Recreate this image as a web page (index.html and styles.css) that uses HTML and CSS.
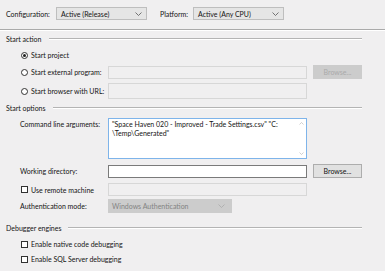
FILE: index.html
```html
<!DOCTYPE html>
<html>
<head>
  <meta charset='utf-8'>
  <title>Debug</title>
  <link rel="stylesheet" href="styles.css">
</head>
<body>

  <div class="topbar">
    <span class="label">Configuration:</span>
    <div class="combo combo-top">
      <span>Active (Release)</span>
      <svg class="chev" width="7" height="4" viewBox="0 0 7 4"><polyline points="0.5,0.5 3.5,3.5 6.5,0.5" fill="none" stroke="#555" stroke-width="0.8"/></svg>
    </div>
    <span class="label platform">Platform:</span>
    <div class="combo combo-top">
      <span>Active (Any CPU)</span>
      <svg class="chev" width="7" height="4" viewBox="0 0 7 4"><polyline points="0.5,0.5 3.5,3.5 6.5,0.5" fill="none" stroke="#555" stroke-width="0.8"/></svg>
    </div>
  </div>
  <div class="separator"></div>

  <!-- Start action -->
  <div class="group-head head-action"><span>Start action</span><i></i></div>

  <div class="row row-project">
    <span class="radio checked"></span>
    <span class="opt">Start project</span>
  </div>
  <div class="row row-external">
    <div class="lead">
      <span class="radio"></span>
      <span class="opt">Start external program:</span>
    </div>
    <div class="box disabled"></div>
    <div class="button disabled">Browse...</div>
  </div>
  <div class="row row-url">
    <div class="lead">
      <span class="radio"></span>
      <span class="opt">Start browser with URL:</span>
    </div>
    <div class="box disabled tall"></div>
  </div>

  <!-- Start options -->
  <div class="group-head head-options"><span>Start options</span><i></i></div>

  <div class="row row-args">
    <div class="lead"><span class="sub">Command line arguments:</span></div>
    <div class="textarea">
      <div class="args">"Space Haven 020 - Improved - Trade Settings.csv" "C:<br>\Temp\Generated"</div>
      <div class="scroll">
        <svg width="5" height="3" viewBox="0 0 5 3"><polyline points="0.5,2.5 2.5,0.5 4.5,2.5" fill="none" stroke="#bbb" stroke-width="0.7"/></svg>
        <svg width="5" height="3" viewBox="0 0 5 3"><polyline points="0.5,0.5 2.5,2.5 4.5,0.5" fill="none" stroke="#bbb" stroke-width="0.7"/></svg>
      </div>
    </div>
  </div>
  <div class="row row-workdir">
    <div class="lead"><span class="sub">Working directory:</span></div>
    <div class="box"></div>
    <div class="button">Browse...</div>
  </div>
  <div class="row row-remote">
    <div class="lead">
      <span class="check"></span>
      <span class="opt">Use remote machine</span>
    </div>
    <div class="box disabled"></div>
  </div>
  <div class="row row-auth">
    <div class="lead"><span class="sub">Authentication mode:</span></div>
    <div class="combo combo-auth">
      <span>Windows Authentication</span>
      <svg class="chev" width="7" height="4" viewBox="0 0 7 4"><polyline points="0.5,0.5 3.5,3.5 6.5,0.5" fill="none" stroke="#aaa" stroke-width="0.8"/></svg>
    </div>
  </div>

  <!-- Debugger engines -->
  <div class="group-head head-engines"><span>Debugger engines</span><i></i></div>

  <div class="row row-native">
    <span class="check"></span>
    <span class="opt">Enable native code debugging</span>
  </div>
  <div class="row row-sql">
    <span class="check"></span>
    <span class="opt">Enable SQL Server debugging</span>
  </div>

</body>
</html>
```

FILE: styles.css
```css
html,
body {
  margin: 0;
  padding: 0;
  background: rgb(240, 239, 240);
}
body {
  width: 385px;
  height: 271px;
  overflow: hidden;
  font-family: "Segoe UI", Lato, "Open Sans", sans-serif;
  font-size: 7px;
  color: rgb(20, 20, 20);
  white-space: nowrap;
}

/* 상단 구성 / 플랫폼 */
.topbar {
  display: flex;
  align-items: center;
  height: 13px;
  padding: 7px 0 0 6px;
}
.topbar .label {
  width: 50px;
  flex-shrink: 0;
}
.topbar .platform {
  width: 33px;
  margin-left: 13px;
}
.combo {
  display: flex;
  align-items: center;
  justify-content: space-between;
  flex-shrink: 0;
  box-sizing: border-box;
  padding: 0 4px 0 4px;
  background: rgb(229, 229, 229);
  border: 1px solid rgb(190, 190, 190);
}
.combo-top {
  width: 91px;
  height: 13px;
}
.separator {
  margin-top: 9px;
  height: 0;
  border-top: 1px solid rgb(170, 170, 170);
  border-bottom: 1px solid rgb(255, 255, 255);
}

/* 그룹 제목 + 가로줄 */
.group-head {
  display: flex;
  align-items: center;
  width: 356px;
  padding-left: 6px;
  height: 10px;
}
.group-head i {
  flex: 1;
  margin-left: 7px;
  border-top: 1px solid rgb(180, 180, 180);
  border-bottom: 1px solid rgb(255, 255, 255);
}
.head-action { margin-top: 3px; }
.head-options { margin-top: 4px; }
.head-engines { margin-top: 10px; }

.row {
  display: flex;
  align-items: center;
  padding-left: 21px;
}
.lead {
  display: flex;
  align-items: center;
  flex-shrink: 0;
  width: 87px;
}
.sub {
  margin-left: -1px;
}
.opt {
  margin-left: 3px;
}

.radio {
  width: 7px;
  height: 7px;
  flex-shrink: 0;
  box-sizing: border-box;
  border: 1px solid rgb(50, 50, 50);
  border-radius: 50%;
  background: #fff;
  position: relative;
}
.radio.checked::after {
  content: "";
  position: absolute;
  left: 1px;
  top: 1px;
  width: 3px;
  height: 3px;
  border-radius: 50%;
  background: rgb(30, 30, 30);
}
.check {
  width: 7px;
  height: 7px;
  flex-shrink: 0;
  box-sizing: border-box;
  border: 1px solid rgb(50, 50, 50);
  background: #fff;
}

.box {
  flex-shrink: 0;
  box-sizing: border-box;
  width: 199px;
  height: 13px;
  background: #fff;
  border: 1px solid rgb(122, 122, 122);
}
.box.disabled {
  background: rgb(240, 239, 240);
  border-color: rgb(215, 215, 215);
}
.box.tall {
  height: 16px;
}
.button {
  display: flex;
  align-items: center;
  justify-content: center;
  flex-shrink: 0;
  box-sizing: border-box;
  width: 49px;
  height: 14px;
  margin-left: 6px;
  background: rgb(225, 225, 225);
  border: 1px solid rgb(173, 173, 173);
}
.button.disabled {
  background: rgb(204, 204, 204);
  border-color: rgb(204, 204, 204);
  color: rgb(170, 170, 170);
}

.textarea {
  display: flex;
  flex-shrink: 0;
  box-sizing: border-box;
  width: 199px;
  height: 41px;
  background: #fff;
  border: 1px solid rgb(126, 180, 234);
}
.args {
  flex: 1;
  padding: 1px 0 0 3px;
  line-height: 9px;
}
.scroll {
  display: flex;
  flex-direction: column;
  justify-content: space-between;
  align-items: center;
  width: 9px;
  padding: 3px 0 3px;
}
.scroll svg {
  display: block;
}

.combo-auth {
  width: 124px;
  height: 14px;
  background: rgb(204, 204, 204);
  border-color: rgb(204, 204, 204);
  color: rgb(131, 131, 131);
  padding-left: 3px;
  padding-right: 6px;
}

.row-project { height: 10px; margin-top: 6px; }
.row-external { height: 14px; margin-top: 5px; }
.row-url { height: 16px; margin-top: 4px; }
.row-args { height: 41px; margin-top: 5px; align-items: flex-start; }
.row-args .lead { margin-top: 2px; }
.row-workdir { height: 14px; margin-top: 5px; }
.row-remote { height: 13px; margin-top: 5px; }
.row-auth { height: 14px; margin-top: 3px; }
.row-native { height: 10px; margin-top: 6px; }
.row-sql { height: 10px; margin-top: 5px; }
```
